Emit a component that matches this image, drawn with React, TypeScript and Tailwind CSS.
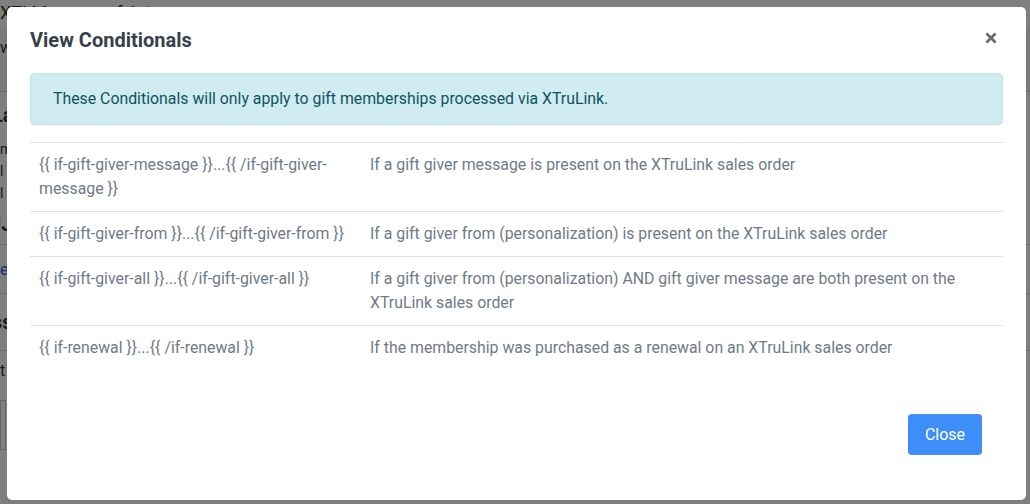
import React from "react";

const rows: [string, string][] = [
  ["{{ if-gift-giver-message }}...{{ /if-gift-giver-message }}", "If a gift giver message is present on the XTruLink sales order"],
  ["{{ if-gift-giver-from }}...{{ /if-gift-giver-from }}", "If a gift giver from (personalization) is present on the XTruLink sales order"],
  ["{{ if-gift-giver-all }}...{{ /if-gift-giver-all }}", "If a gift giver from (personalization) AND gift giver message are both present on the XTruLink sales order"],
  ["{{ if-renewal }}...{{ /if-renewal }}", "If the membership was purchased as a renewal on an XTruLink sales order"],
];

export default function App() {
  return (
    <div className="relative w-[1030px] h-[504px] overflow-hidden bg-white" style={{ fontFamily: "Roboto, 'Liberation Sans', sans-serif" }}>
      {/* background page */}
      <div className="flex flex-col text-[#333]">
        <div className="h-[28px] text-[18px] leading-[26px]">XTI Museum of Art</div>
        <div className="h-[64px] bg-[#f4f4f4] border-b border-[#ddd] text-[16px] leading-[40px]">ww</div>
        <div className="h-[46px] font-bold text-[20px] leading-[46px] -ml-[8px]">Lab</div>
        <div className="text-[14px] leading-[22px]">m</div>
        <div className="text-[14px] leading-[22px]">l</div>
        <div className="text-[14px] leading-[22px]">l</div>
        <div className="h-[40px] font-bold text-[20px] leading-[40px] -ml-[10px]">JJ</div>
        <div className="h-[50px] border-y border-[#ddd] text-[16px] leading-[50px] text-[#36c]">e</div>
        <div className="h-[56px] font-bold text-[20px] leading-[56px] -ml-[8px]">ss</div>
        <div className="h-[50px] border-t border-[#ddd] text-[16px] leading-[40px]">t</div>
        <div className="h-[50px] border border-[#ccc] w-[6px]"></div>
      </div>
      {/* backdrop */}
      <div className="absolute inset-0 bg-black/50"></div>
      {/* modal */}
      <div className="absolute left-[7px] top-[7px] w-[1019px] h-[493px] bg-white rounded-[5px] flex flex-col">
        <div className="flex items-start justify-between px-[23px] pt-[18px] h-[66px]">
          <h5 className="text-[20px] leading-[30px] font-bold text-[#36424b]">View Conditionals</h5>
          <button className="mt-[7px] mr-[6px]" aria-label="Close">
            <svg width="12" height="12" viewBox="0 0 12 12">
              <path d="M1.5 1.5 L10.5 10.5 M10.5 1.5 L1.5 10.5" stroke="#6b6b6b" strokeWidth="2.8" strokeLinecap="butt" />
            </svg>
          </button>
        </div>
        <div className="px-[23px]">
          <div className="bg-[#d1ecf1] border border-[#bee5eb] rounded-[4px] text-[#0c5460] text-[15.85px] leading-[24px] pl-[22px] pr-[20px] py-[13px]">
            These Conditionals will only apply to gift memberships processed via XTruLink.
          </div>
          <table className="w-full mt-[17px] border-collapse text-[15.85px] leading-[24px] text-[#6f7b87]">
            <tbody>
              {rows.map(([a, b], i) => (
                <tr key={i} className="border-t border-[#dee2e6] align-top">
                  <td className="w-[340px] pl-[9px] pr-[12px] py-[10px]">{a}</td>
                  <td className="pl-0 pr-[10px] py-[10px]">{b}</td>
                </tr>
              ))}
            </tbody>
          </table>
        </div>
        <div className="flex-1"></div>
        <div className="flex justify-end px-[44px] pb-[45px]">
          <button className="bg-[#3d8ef8] text-white text-[16px] leading-[24px] w-[74px] h-[41px] rounded-[4px]">Close</button>
        </div>
      </div>
    </div>
  );
}
